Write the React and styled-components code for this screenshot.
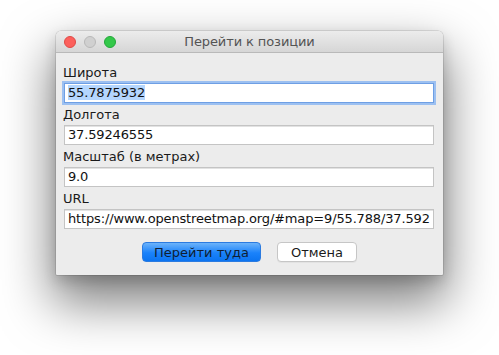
import React from "react";
import styled, { createGlobalStyle } from "styled-components";

const Global = createGlobalStyle`
  html, body { margin: 0; padding: 0; background: #ffffff; }
  body { font-family: "DejaVu Sans", "Liberation Sans", sans-serif; }
`;

const Stage = styled.div`
  width: 499px;
  height: 355px;
  padding: 31px 0 0 56px;
  box-sizing: border-box;
  overflow: hidden;
`;

const Window = styled.div`
  width: 387px;
  height: 244px;
  background: #ececec;
  border-radius: 5px 5px 1px 1px;
  box-shadow: 0 0 0 0.5px rgba(0,0,0,0.2), 0 24px 50px 4px rgba(0,0,0,0.5), 0 6px 14px rgba(0,0,0,0.16);
  display: flex;
  flex-direction: column;
  overflow: hidden;
`;

const TitleBar = styled.div`
  height: 22px;
  flex: none;
  position: relative;
  display: flex;
  align-items: center;
  justify-content: center;
  background: linear-gradient(#ececec, #d6d6d6);
  border-bottom: 1px solid #b9b9b9;
  box-sizing: border-box;
`;

const Lights = styled.div`
  position: absolute;
  left: 8px;
  top: 5px;
  display: flex;
  gap: 8px;
`;

const Light = styled.span`
  width: 12px;
  height: 12px;
  border-radius: 50%;
  box-sizing: border-box;
  background: ${(p) => p.$c};
  border: 0.5px solid ${(p) => p.$b};
`;

const Title = styled.div`
  font-size: 13px;
  color: #545454;
  letter-spacing: -0.1px;
`;

const Body = styled.div`
  flex: 1;
  display: flex;
  flex-direction: column;
  padding: 12px 9px 0 7px;
`;

const Group = styled.div`
  display: flex;
  flex-direction: column;
  margin-bottom: 4px;
`;

const Label = styled.div`
  font-size: 13px;
  line-height: 16px;
  color: #1a1a1a;
  height: 16px;
  margin-bottom: 2px;
`;

const Field = styled.div`
  margin-left: 1px;
  height: 20px;
  box-sizing: border-box;
  background: #fff;
  border: 1px solid ${(p) => (p.$focus ? "#6e9fe4" : "#c4c4c4")};
  box-shadow: ${(p) => (p.$focus ? "0 0 0 2px #9cc0f1" : "inset 0 1px 0 #e2e2e2")};
  font-size: 13px;
  line-height: 18px;
  color: #111;
  padding-left: 3px;
  white-space: nowrap;
  overflow: hidden;
  letter-spacing: -0.15px;
`;

const Sel = styled.span`
  background: #b4d6fe;
`;

const Buttons = styled.div`
  display: flex;
  justify-content: center;
  gap: 16px;
  margin-top: 9px;
  padding-left: 2px;
`;

const Button = styled.div`
  height: 20px;
  width: ${(p) => p.$w}px;
  box-sizing: border-box;
  border-radius: 4px;
  font-size: 13px;
  line-height: 19px;
  text-align: center;
  ${(p) =>
    p.$primary
      ? `background: linear-gradient(#6cb3fa, #1a82fb 55%, #0c74f0);
         border: 1px solid #2b7be0;
         color: #0f1e33;`
      : `background: #fff;
         border: 1px solid #c6c6c6;
         box-shadow: 0 1px 0 rgba(0,0,0,0.04);
         color: #1a1a1a;`}
`;

export default function App() {
  return (
    <>
      <Global />
      <Stage>
        <Window>
          <TitleBar>
            <Lights>
              <Light $c="#fc605c" $b="#de4a46" />
              <Light $c="#d0d0d0" $b="#b8b8b8" />
              <Light $c="#34c84a" $b="#24a73a" />
            </Lights>
            <Title>Перейти к позиции</Title>
          </TitleBar>
          <Body>
            <Group>
              <Label>Широта</Label>
              <Field $focus>
                <Sel>55.7875932</Sel>
              </Field>
            </Group>
            <Group>
              <Label>Долгота</Label>
              <Field>37.59246555</Field>
            </Group>
            <Group>
              <Label>Масштаб (в метрах)</Label>
              <Field>9.0</Field>
            </Group>
            <Group>
              <Label>URL</Label>
              <Field>https://www.openstreetmap.org/#map=9/55.788/37.592</Field>
            </Group>
            <Buttons>
              <Button $primary $w={119}>Перейти туда</Button>
              <Button $w={80}>Отмена</Button>
            </Buttons>
          </Body>
        </Window>
      </Stage>
    </>
  );
}
